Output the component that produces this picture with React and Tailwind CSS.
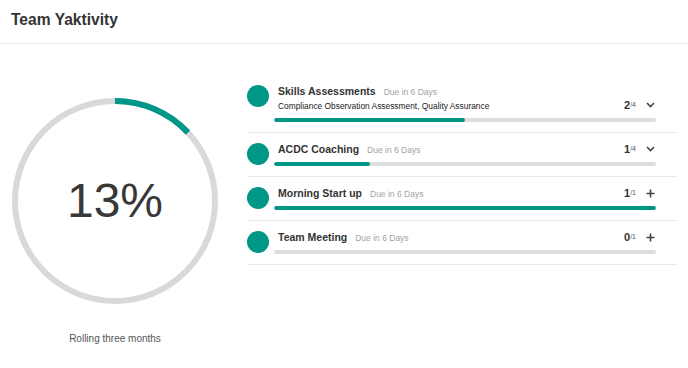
import React from "react";

const activities = [
  { title: "Skills Assessments", due: "Due in 6 Days", sub: "Compliance Observation Assessment, Quality Assurance", done: 2, total: 4, open: true },
  { title: "ACDC Coaching", due: "Due in 6 Days", done: 1, total: 4, open: true },
  { title: "Morning Start up", due: "Due in 6 Days", done: 1, total: 1 },
  { title: "Team Meeting", due: "Due in 6 Days", done: 0, total: 1 },
];

function Chevron() {
  return (
    <svg width="9" height="6" viewBox="0 0 9 6" fill="none">
      <path d="M1 1l3.5 3.5L8 1" stroke="#444" strokeWidth="1.6" />
    </svg>
  );
}

function Plus() {
  return (
    <svg width="9" height="9" viewBox="0 0 9 9" fill="none">
      <path d="M4.5 0.5v8M0.5 4.5h8" stroke="#444" strokeWidth="1.6" />
    </svg>
  );
}

function Ring({ percent }) {
  const r = 100;
  const c = 2 * Math.PI * r;
  return (
    <div className="relative w-[206px] h-[206px]">
      <svg width="206" height="206" viewBox="0 0 206 206" className="-rotate-90">
        <circle cx="103" cy="103" r={r} fill="none" stroke="#d9d9d9" strokeWidth="6" />
        <circle
          cx="103"
          cy="103"
          r={r}
          fill="none"
          stroke="#009688"
          strokeWidth="6"
          strokeDasharray={`${(c * percent) / 100} ${c}`}
        />
      </svg>
      <div className="absolute inset-0 flex items-center justify-center text-[48px] leading-none text-[#383838]">
        {percent}%
      </div>
    </div>
  );
}

function ActivityRow({ item }) {
  return (
    <div className="flex items-start pt-[8px] pb-[10px] border-b border-[#e8e8e8]">
      <div className="w-[22px] h-[22px] rounded-full bg-[#009688] mt-[2px] shrink-0" />
      <div className="flex-1 ml-[5px] mr-[21px]">
        <div className="flex items-end justify-between pl-[4px]">
          <div>
            <div className="flex items-baseline gap-[8px] h-[16px] leading-[16px]">
              <span className="text-[10.5px] font-bold text-[#333]">{item.title}</span>
              <span className="text-[8.5px] text-[#a3a3a3]">{item.due}</span>
            </div>
            {item.sub && (
              <div className="text-[8.4px] h-[14px] leading-[14px] text-[#222]">{item.sub}</div>
            )}
          </div>
          <div className="flex items-center h-[16px]">
            <span className="text-[11px] font-bold text-[#333]">{item.done}</span>
            <span className="text-[7px] text-[#555]">/{item.total}</span>
            <span className="w-[12px] ml-[8px] flex justify-center">
              {item.open ? <Chevron /> : <Plus />}
            </span>
          </div>
        </div>
        <div className="mt-[5px] h-[4px] rounded-full bg-[#dedede] overflow-hidden">
          <div
            className="h-full rounded-full bg-[#009688]"
            style={{ width: `${(item.done / item.total) * 100}%` }}
          />
        </div>
      </div>
    </div>
  );
}

export default function App() {
  return (
    <div className="w-full h-[368px] bg-white font-['Liberation_Sans',Arial,sans-serif]">
      <div className="h-[44px] border-b border-[#ebebeb] flex items-center pl-[11px]">
        <h1 className="text-[15.6px] font-bold text-[#333] -mt-[3px]">Team Yaktivity</h1>
      </div>
      <div className="flex">
        <div className="w-[230px] flex flex-col items-center pt-[54px]">
          <Ring percent={13} />
          <div className="mt-[28px] text-[10px] leading-[14px] text-[#555]">Rolling three months</div>
        </div>
        <div className="flex-1 ml-[17px] mr-[11px] pt-[31px]">
          {activities.map((a) => (
            <ActivityRow key={a.title} item={a} />
          ))}
        </div>
      </div>
    </div>
  );
}
